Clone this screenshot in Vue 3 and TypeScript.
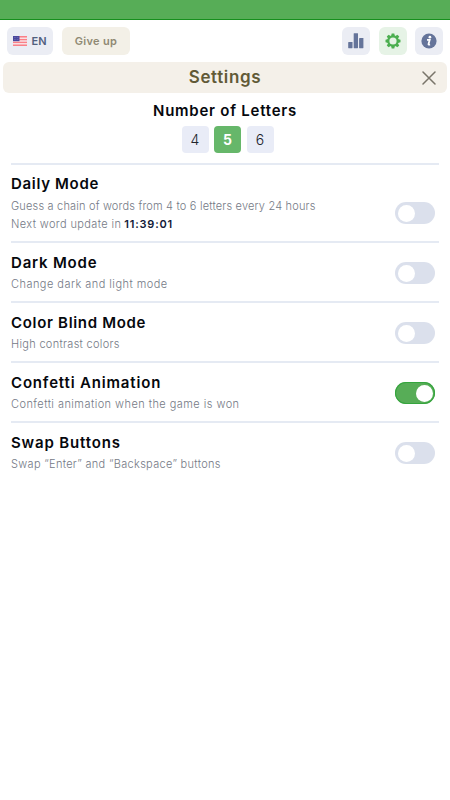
<script setup lang="ts">
import { reactive, ref } from 'vue'

interface Setting {
  id: string
  title: string
  lines: string[]
  countdown?: string
  on: boolean
}

const lengths = [4, 5, 6]
const selected = ref(5)

const settings = reactive<Setting[]>([
  { id: 'daily', title: 'Daily Mode', lines: ['Guess a chain of words from 4 to 6 letters every 24 hours', 'Next word update in'], countdown: '11:39:01', on: false },
  { id: 'dark', title: 'Dark Mode', lines: ['Change dark and light mode'], on: false },
  { id: 'contrast', title: 'Color Blind Mode', lines: ['High contrast colors'], on: false },
  { id: 'confetti', title: 'Confetti Animation', lines: ['Confetti animation when the game is won'], on: true },
  { id: 'swap', title: 'Swap Buttons', lines: ['Swap “Enter” and “Backspace” buttons'], on: false },
])

const teeth = [0, 45, 90, 135, 180, 225, 270, 315]
</script>

<template>
  <div class="page">
    <div class="strip"></div>
    <header class="toolbar">
      <button class="btn lang">
        <svg class="flag" viewBox="0 0 14 10" width="14" height="10">
          <rect width="14" height="10" rx="1" fill="#f9dfe3" />
          <path d="M0 .8h14M0 3.6h14M0 6.4h14M0 9.2h14" stroke="#fa8088" stroke-width="1.4" />
          <rect width="6.5" height="5.2" fill="#4a489c" />
          <path d="M1 1.5h4.8M1 3.5h4.8" stroke="#8d8dc6" stroke-width=".6" stroke-dasharray=".7 .8" />
        </svg>
        <span>EN</span>
      </button>
      <button class="btn give">Give up</button>
      <div class="tools">
        <button class="btn tool" aria-label="Statistics">
          <svg viewBox="0 0 28 28" width="28" height="28" fill="#65749a">
            <rect x="6.2" y="15" width="4.3" height="6.2" rx=".4" />
            <rect x="11.7" y="6.2" width="4.3" height="15" rx=".4" />
            <rect x="17.1" y="11" width="4.3" height="10.2" rx=".4" />
          </svg>
        </button>
        <button class="btn tool active" aria-label="Settings">
          <svg viewBox="0 0 28 28" width="28" height="28">
            <g fill="#4caf50">
              <path v-for="a in teeth" :key="a" d="M12.1 9.2 12.7 6.5h2.6l.6 2.7z" :transform="`rotate(${a} 14 14)`" />
            </g>
            <circle cx="14" cy="14" r="4.7" fill="none" stroke="#4caf50" stroke-width="2.2" />
          </svg>
        </button>
        <button class="btn tool" aria-label="Information">
          <svg viewBox="0 0 28 28" width="28" height="28">
            <circle cx="14" cy="14" r="7.6" fill="#65749a" />
            <circle cx="14.9" cy="10.2" r="1.35" fill="#fff" />
            <path d="M12 12.8h2.7l-1.2 4.3q-.2 1 1.6.4" fill="none" stroke="#fff" stroke-width="1.8" />
          </svg>
        </button>
      </div>
    </header>

    <div class="heading">
      <h1>Settings</h1>
      <button class="close" aria-label="Close">
        <svg viewBox="0 0 14 14" width="14" height="14">
          <path d="M1 1l12 12M13 1L1 13" stroke="#79756a" stroke-width="1.5" stroke-linecap="round" />
        </svg>
      </button>
    </div>

    <main>
      <section class="letters">
        <h2>Number of Letters</h2>
        <div class="choices">
          <button v-for="n in lengths" :key="n" class="choice" :class="{ chosen: n === selected }" @click="selected = n">{{ n }}</button>
        </div>
      </section>
      <section v-for="s in settings" :key="s.id" class="row" :class="s.id">
        <div class="copy">
          <h3>{{ s.title }}</h3>
          <p v-for="(line, i) in s.lines" :key="i">
            <span :class="'line' + i">{{ line }}</span>
            <b v-if="s.countdown && i === s.lines.length - 1">{{ s.countdown }}</b>
          </p>
        </div>
        <button class="toggle" :class="{ on: s.on }" role="switch" :aria-checked="s.on" :aria-label="s.title" @click="s.on = !s.on">
          <span class="knob"></span>
        </button>
      </section>
    </main>
  </div>
</template>

<style>
body {
  background: #fff;
}
</style>

<style scoped>
.page {
  min-height: 800px;
  font-family: Inter, "Noto Sans", sans-serif;
  color: #06080d;
}
button {
  border: 0;
  padding: 0;
  font: inherit;
  color: inherit;
  cursor: pointer;
}
h1, h2, h3, p {
  margin: 0;
}
.strip {
  box-sizing: border-box;
  height: 20px;
  background: #57ad57;
  border-bottom: 1px solid #168f1d;
}
.toolbar {
  display: flex;
  align-items: center;
  padding: 7px 7px 7px;
}
.btn {
  display: flex;
  align-items: center;
  justify-content: center;
  height: 28px;
  border-radius: 6px;
  background: #ebedf4;
  font-size: 11px;
  font-weight: 700;
}
.lang {
  width: 46px;
  gap: 4px;
  color: #51607f;
  font-weight: 600;
}
.flag {
  flex: none;
}
.give {
  width: 68px;
  margin-left: 9px;
  background: #f3f0e7;
  color: #8f8973;
  font-weight: 600;
  letter-spacing: .35px;
}
.tools {
  display: flex;
  gap: 8.5px;
  margin-left: auto;
}
.tool {
  width: 28px;
}
.active {
  background: #e6f3e6;
}
.heading {
  display: grid;
  grid-template-columns: 36px 1fr 36px;
  align-items: center;
  height: 31px;
  margin: 0 3px;
  border-radius: 6px;
  background: #f4f0e9;
}
h1 {
  grid-column: 2;
  text-align: center;
  font-size: 17px;
  line-height: 31px;
  font-weight: 600;
  letter-spacing: .65px;
  color: #615a37;
}
.close {
  display: flex;
  justify-content: center;
  background: none;
}
main {
  margin: 0 11px;
}
.letters {
  display: flex;
  flex-direction: column;
  align-items: center;
  height: 70px;
}
h2 {
  margin-top: 8px;
  font-size: 15px;
  line-height: 19px;
  font-weight: 600;
  letter-spacing: .75px;
}
.choices {
  display: flex;
  gap: 5.5px;
  margin-top: 6px;
  margin-left: 5px;
}
.choice {
  width: 27px;
  height: 27px;
  border-radius: 4px;
  background: #e9ecf7;
  font-size: 14px;
  font-weight: 300;
  color: #20242c;
}
.chosen {
  background: #66b76a;
  color: #fff;
  font-weight: 700;
}
.row {
  box-sizing: border-box;
  display: flex;
  justify-content: space-between;
  height: 60px;
  padding-right: 4px;
  border-top: 2px solid #e5eaf3;
}
.daily {
  height: 78px;
}
h3 {
  margin-top: 10px;
  font-size: 15px;
  line-height: 20px;
  font-weight: 600;
  letter-spacing: .75px;
}
p {
  padding-top: 3px;
  font-size: 11px;
  line-height: 15px;
  font-weight: 300;
  color: #747985;
  white-space: nowrap;
}
h3 + p {
  padding-top: 4px;
}
b {
  margin-left: 3px;
  font-weight: 600;
  letter-spacing: .8px;
  color: #111a38;
}
.daily h3 {
  margin-top: 9px;
  letter-spacing: .68px;
}
.daily h3 + p {
  padding-top: 5px;
}
.daily .line0 { letter-spacing: .18px; }
.daily .line1 { letter-spacing: .38px; }
.dark h3 { letter-spacing: .8px; }
.dark p { letter-spacing: .46px; }
.contrast h3 { letter-spacing: .68px; }
.contrast p { letter-spacing: .3px; }
.confetti h3 { letter-spacing: .83px; }
.confetti p { letter-spacing: .45px; }
.swap h3 { letter-spacing: .84px; }
.swap p { letter-spacing: .31px; }
.toggle {
  flex: none;
  display: flex;
  align-items: center;
  box-sizing: border-box;
  width: 40px;
  height: 22px;
  margin-top: 19px;
  padding: 0 2.5px;
  border-radius: 11px;
  background: #dbe0ec;
}
.daily .toggle {
  margin-top: 37px;
}
.knob {
  width: 17px;
  height: 17px;
  border-radius: 50%;
  background: #fff;
}
.on {
  justify-content: flex-end;
  background: #57ad57;
  box-shadow: inset 0 0 0 1px #35a53e;
}
</style>
